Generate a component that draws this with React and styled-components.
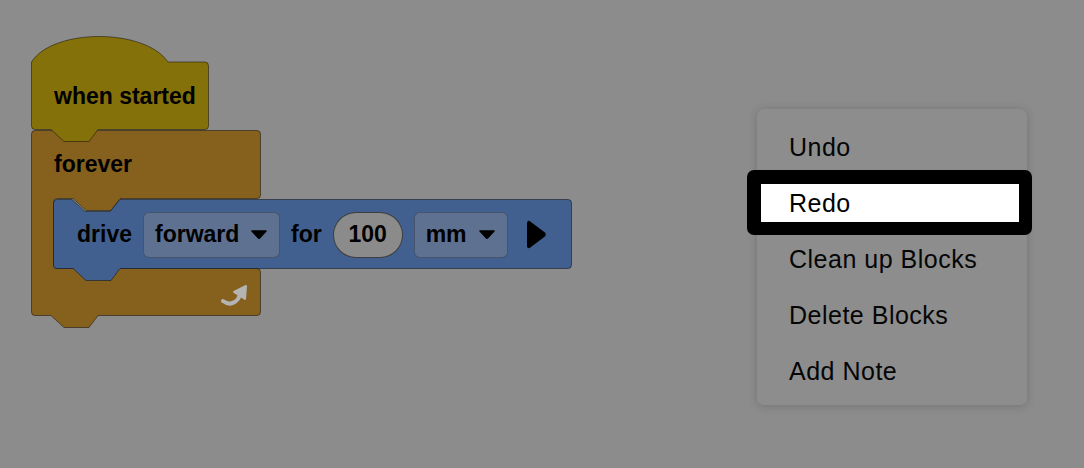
import styled, { createGlobalStyle } from "styled-components";

const GlobalStyle = createGlobalStyle`
  html, body {
    margin: 0;
    padding: 0;
    background: #8c8c8c;
  }
  body {
    font-family: "Liberation Sans", Arial, sans-serif;
  }
`;

const colors = {
  bg: "#8c8c8c",
  events: "#857109",
  control: "#86611e",
  motion: "#41608f",
  field: "#5e7190",
  edge: "rgba(0, 0, 0, 0.45)",
};

// block outlines, drawn on the block's own box
const HAT_PATH =
  "M0.5,25 C22,-9 114,-9 137,25 L174,25 Q177.5,25 177.5,29 L177.5,89 Q177.5,92.5 174,92.5 L67,92.5 L58,104.5 L33,104.5 L20,92.5 L4,92.5 Q0.5,92.5 0.5,89 Z";

const FOREVER_PATH =
  "M0.5,4 Q0.5,0.5 4,0.5 L226,0.5 Q229.5,0.5 229.5,4 L229.5,65 Q229.5,68.5 226,68.5 L89,68.5 L80,80.5 L55,80.5 L42,68.5 L26,68.5 Q22.5,68.5 22.5,72 L22.5,135 Q22.5,138.5 26,138.5 L226,138.5 Q229.5,138.5 229.5,142 L229.5,182 Q229.5,185.5 226,185.5 L67,185.5 L58,197.5 L33,197.5 L20,185.5 L4,185.5 Q0.5,185.5 0.5,182 Z";

const DRIVE_PATH =
  "M0.5,4 Q0.5,0.5 4,0.5 L19,0.5 L32,12.5 L57,12.5 L67,0.5 L515,0.5 Q518.5,0.5 518.5,4 L518.5,66 Q518.5,69.5 515,69.5 L67,69.5 L58,81.5 L33,81.5 L20,69.5 L4,69.5 Q0.5,69.5 0.5,66 Z";

const Page = styled.div`
  position: relative;
  width: 1084px;
  height: 468px;
  overflow: hidden;
  background: ${colors.bg};
`;

const Script = styled.div`
  position: absolute;
  left: 31px;
  top: 37px;
  display: flex;
  flex-direction: column;
`;

const BlockShape = styled.svg`
  position: absolute;
  left: 0;
  top: 0;
  overflow: visible;
  z-index: -1;
`;

const Block = styled.div`
  position: relative;
  z-index: ${(p) => p.$layer || 0};
  width: ${(p) => p.$w}px;
  height: ${(p) => p.$h}px;
  flex-shrink: 0;
  isolation: isolate;
`;

const BlockLabel = styled.span`
  font-weight: bold;
  font-size: 23px;
  color: #000;
  white-space: nowrap;
`;

const HatBody = styled.div`
  height: 68px;
  margin-top: 25px;
  display: flex;
  align-items: center;
  padding-left: 23px;
`;

const ControlHeader = styled.div`
  height: 69px;
  display: flex;
  align-items: center;
  padding-left: 23px;
`;

const ControlFoot = styled.div`
  height: 47px;
  width: 230px;
  display: flex;
  justify-content: flex-end;
  align-items: center;
  padding-right: 12px;
  box-sizing: border-box;
`;

const Inner = styled.div`
  margin-left: 22px;
`;

const StackRow = styled.div`
  height: 71px;
  display: flex;
  align-items: center;
  padding-left: 24px;
  gap: 11px;
`;

const Dropdown = styled.div`
  width: ${(p) => p.$w}px;
  height: 46px;
  box-sizing: border-box;
  background: ${colors.field};
  border: 1px solid rgba(0, 0, 0, 0.25);
  border-radius: 6px;
  display: flex;
  align-items: center;
  justify-content: space-between;
  padding: 0 12px 0 11px;
`;

const NumberField = styled.div`
  width: 70px;
  height: 46px;
  box-sizing: border-box;
  border-radius: 23px;
  border: 1px solid rgba(0, 0, 0, 0.55);
  background: #8b8b8b;
  display: flex;
  align-items: center;
  justify-content: center;
`;

const Caret = () => (
  <svg width="16" height="9" viewBox="0 0 16 9">
    <path d="M1,1 L15,1 L8.5,8 Q8,8.5 7.5,8 Z" fill="#000" stroke="#000" strokeWidth="1.5" strokeLinejoin="round" />
  </svg>
);

const PlayArrow = styled.svg`
  margin-left: 7px;
`;

const LoopIcon = () => (
  <svg width="28" height="26" viewBox="0 0 28 26">
    <path d="M2,21 Q10,27 17,19 L19,15" fill="none" stroke="#b4b4b4" strokeWidth="4" strokeLinecap="round" />
    <path d="M13,12 L25,6 L24,19 Z" fill="#b4b4b4" stroke="#b4b4b4" strokeWidth="2" strokeLinejoin="round" />
  </svg>
);

const Menu = styled.div`
  position: absolute;
  left: 757px;
  top: 109px;
  width: 270px;
  box-sizing: border-box;
  padding: 10px 0 6px;
  background: #8d8d8d;
  border-radius: 7px;
  box-shadow: 0 1px 10px rgba(0, 0, 0, 0.18);
  display: flex;
  flex-direction: column;
`;

const MenuItem = styled.div`
  height: 56px;
  display: flex;
  align-items: center;
  padding-left: 32px;
  font-size: 25px;
  letter-spacing: 0.5px;
  color: #050505;
  white-space: nowrap;
`;

const FocusRing = styled.div`
  height: 65px;
  margin: -5px -5px -4px -10px;
  box-sizing: border-box;
  padding: 14px 13px 13px 14px;
  background: #000;
  border-radius: 7px;
  display: flex;
`;

const FocusLabel = styled.div`
  flex: 1;
  background: #fff;
  display: flex;
  align-items: center;
  padding-left: 28px;
  font-size: 25px;
  letter-spacing: 0.5px;
  color: #000;
`;

const menuItems = ["Undo", "Redo", "Clean up Blocks", "Delete Blocks", "Add Note"];

export default function App() {
  return (
    <>
      <GlobalStyle />
      <Page>
        <Script>
          <Block $w={178} $h={93} $layer={3}>
            <BlockShape width="178" height="105">
              <path d={HAT_PATH} fill={colors.events} stroke={colors.edge} />
            </BlockShape>
            <HatBody>
              <BlockLabel>when started</BlockLabel>
            </HatBody>
          </Block>
          <Block $w={230} $h={186} $layer={1}>
            <BlockShape width="230" height="198">
              <path d={FOREVER_PATH} fill={colors.control} stroke={colors.edge} />
            </BlockShape>
            <ControlHeader>
              <BlockLabel>forever</BlockLabel>
            </ControlHeader>
            <Inner>
              <Block $w={519} $h={70} $layer={2}>
                <BlockShape width="519" height="82">
                  <path d={DRIVE_PATH} fill={colors.motion} stroke={colors.edge} />
                </BlockShape>
                <StackRow>
                  <BlockLabel>drive</BlockLabel>
                  <Dropdown $w={137}>
                    <BlockLabel>forward</BlockLabel>
                    <Caret />
                  </Dropdown>
                  <BlockLabel>for</BlockLabel>
                  <NumberField>
                    <BlockLabel>100</BlockLabel>
                  </NumberField>
                  <Dropdown $w={94}>
                    <BlockLabel>mm</BlockLabel>
                    <Caret />
                  </Dropdown>
                  <PlayArrow width="20" height="29" viewBox="0 0 20 29">
                    <path
                      d="M2,3 Q2,1 4,2.5 L18,13 Q19.5,14.5 18,16 L4,26.5 Q2,28 2,26 Z"
                      fill="#000"
                      stroke="#000"
                      strokeWidth="2"
                      strokeLinejoin="round"
                    />
                  </PlayArrow>
                </StackRow>
              </Block>
            </Inner>
            <ControlFoot>
              <LoopIcon />
            </ControlFoot>
          </Block>
        </Script>

        <Menu>
          {menuItems.map((label) =>
            label === "Redo" ? (
              <FocusRing key={label}>
                <FocusLabel>{label}</FocusLabel>
              </FocusRing>
            ) : (
              <MenuItem key={label}>{label}</MenuItem>
            )
          )}
        </Menu>
      </Page>
    </>
  );
}
